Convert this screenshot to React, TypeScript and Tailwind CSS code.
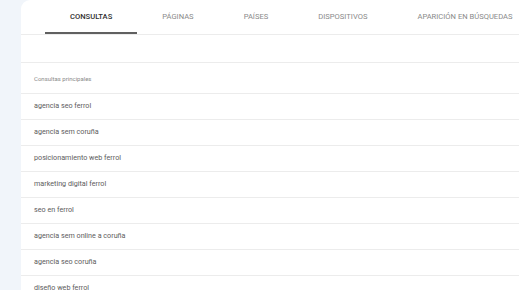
const tabs = ['Consultas', 'Páginas', 'Países', 'Dispositivos', 'Aparición en búsquedas'];

const queries = [
  'agencia seo ferrol',
  'agencia sem coruña',
  'posicionamiento web ferrol',
  'marketing digital ferrol',
  'seo en ferrol',
  'agencia sem online a coruña',
  'agencia seo coruña',
  'diseño web ferrol',
];

export default function App() {
  return (
    <div className="h-[290px] w-[519px] overflow-hidden bg-[#f1f5fa] pl-[21px] font-['Roboto',sans-serif]">
      <div className="h-full w-[560px] rounded-tl-[9px] bg-white">
        {/* Tabs */}
        <div className="flex h-[35px] border-b border-[#ececec] pl-[24px]">
          {tabs.map((t, i) => (
            <div
              key={t}
              className={
                'flex items-center justify-center border-b-2 px-[25px] pt-[1px] text-[7.6px] uppercase whitespace-nowrap ' +
                (i === 0 ? 'border-[#606060] font-medium text-[#303030]' : 'border-transparent text-[#8a8a8a]')
              }
            >
              {t}
            </div>
          ))}
        </div>

        <div className="h-[28px] border-b border-[#ececec]" />

        <div className="flex h-[31px] items-center border-b border-[#ececec] pl-[13px] text-[6px] text-[#8a8a8a]">
          Consultas principales
        </div>

        {queries.map((q) => (
          <div
            key={q}
            className="flex h-[26px] items-center border-b border-[#ececec] pl-[13px] text-[7.2px] text-[#5c5c5c]"
          >
            {q}
          </div>
        ))}
      </div>
    </div>
  );
}
